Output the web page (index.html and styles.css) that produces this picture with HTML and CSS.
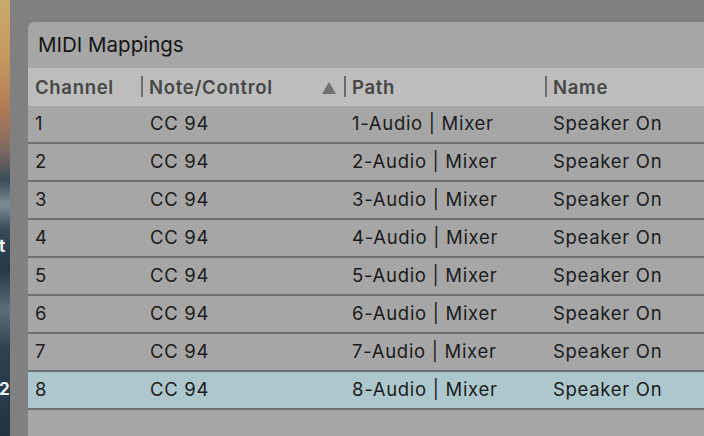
FILE: index.html
```html
<!DOCTYPE html>
<html>
<head>
    <meta charset="UTF-8">
    <meta name="viewport" content="width=device-width, initial-scale=1.0">
    <link rel="stylesheet" href="styles.css">
</head>
<body>
    <div class="desk">
        <div class="wallpaper">
            <span class="label label-a">t</span>
            <span class="label label-b">2</span>
        </div>
        <div class="backdrop">
            <div class="panel">
                <div class="title">MIDI Mappings</div>
                <table class="mappings">
                    <colgroup>
                        <col class="c-channel">
                        <col class="c-note">
                        <col class="c-path">
                        <col class="c-name">
                    </colgroup>
                    <thead>
                        <tr>
                            <th>Channel</th>
                            <th><span class="bar"></span>Note/Control<span class="sort"></span></th>
                            <th><span class="bar"></span>Path</th>
                            <th><span class="bar"></span>Name</th>
                        </tr>
                    </thead>
                    <tbody id="rows">
                    </tbody>
                </table>
            </div>
        </div>
    </div>

    <script>
        const rows = document.getElementById("rows");
        for (let i = 1; i <= 8; i++) {
            const tr = document.createElement("tr");
            if (i === 8) tr.className = "selected";
            tr.innerHTML = `
                <td>${i}</td>
                <td>CC 94</td>
                <td>${i}-Audio | Mixer</td>
                <td>Speaker On</td>
            `;
            rows.appendChild(tr);
        }
    </script>
</body>
</html>
```

FILE: styles.css
```css
html, body {
    margin: 0;
    padding: 0;
    height: 100%;
    overflow: hidden;
}
body {
    font-family: Inter, "Noto Sans", sans-serif;
    color: #1b1b1b;
}
.desk {
    display: flex;
    height: 436px;
}
.wallpaper {
    position: relative;
    width: 10px;
    flex: none;
    overflow: hidden;
    background: linear-gradient(to bottom,
        #c9aa6c 0px,
        #c4975f 60px,
        #b07a55 110px,
        #7d6a63 150px,
        #3c4c58 180px,
        #7d8d94 205px,
        #34495a 230px,
        #25384a 270px,
        #5b6f7a 310px,
        #2c4150 350px,
        #1f3445 436px);
}
.label {
    position: absolute;
    left: -1px;
    color: #f2f2f2;
    font-weight: 700;
    font-size: 17px;
}
.label-a { top: 236px; }
.label-b { top: 379px; }
.backdrop {
    flex: 1;
    background-color: #808080;
    padding: 22px 0 0 18px;
}
.panel {
    background-color: #a6a6a6;
    border-top-left-radius: 6px;
    height: 100%;
}
.title {
    height: 46px;
    line-height: 46px;
    padding-left: 10px;
    font-size: 20.5px;
    color: #151515;
}
.mappings {
    width: 100%;
    border-collapse: collapse;
    table-layout: fixed;
    font-size: 18.5px;
    letter-spacing: 0.7px;
}
.c-channel { width: 114px; }
.c-note { width: 203px; }
.c-path { width: 201px; }
.mappings th {
    position: relative;
    height: 38px;
    padding: 0 0 0 7px;
    background-color: #bdbdbd;
    color: #474747;
    font-weight: 600;
    text-align: left;
}
.bar {
    position: absolute;
    left: -1px;
    top: 8px;
    width: 2px;
    height: 21px;
    background-color: #6b6b6b;
}
.sort {
    position: absolute;
    right: 9px;
    top: 14px;
    width: 0;
    height: 0;
    border-left: 7px solid transparent;
    border-right: 7px solid transparent;
    border-bottom: 12px solid #717171;
}
.mappings td {
    height: 34px;
    padding: 0 0 2px 7px;
    border-bottom: 2px solid #6e6e6e;
    white-space: nowrap;
}
.mappings td + td {
    padding-left: 8px;
}
.mappings td + td + td {
    padding-left: 7px;
}
.selected td {
    background-color: #adc8cc;
}
```
